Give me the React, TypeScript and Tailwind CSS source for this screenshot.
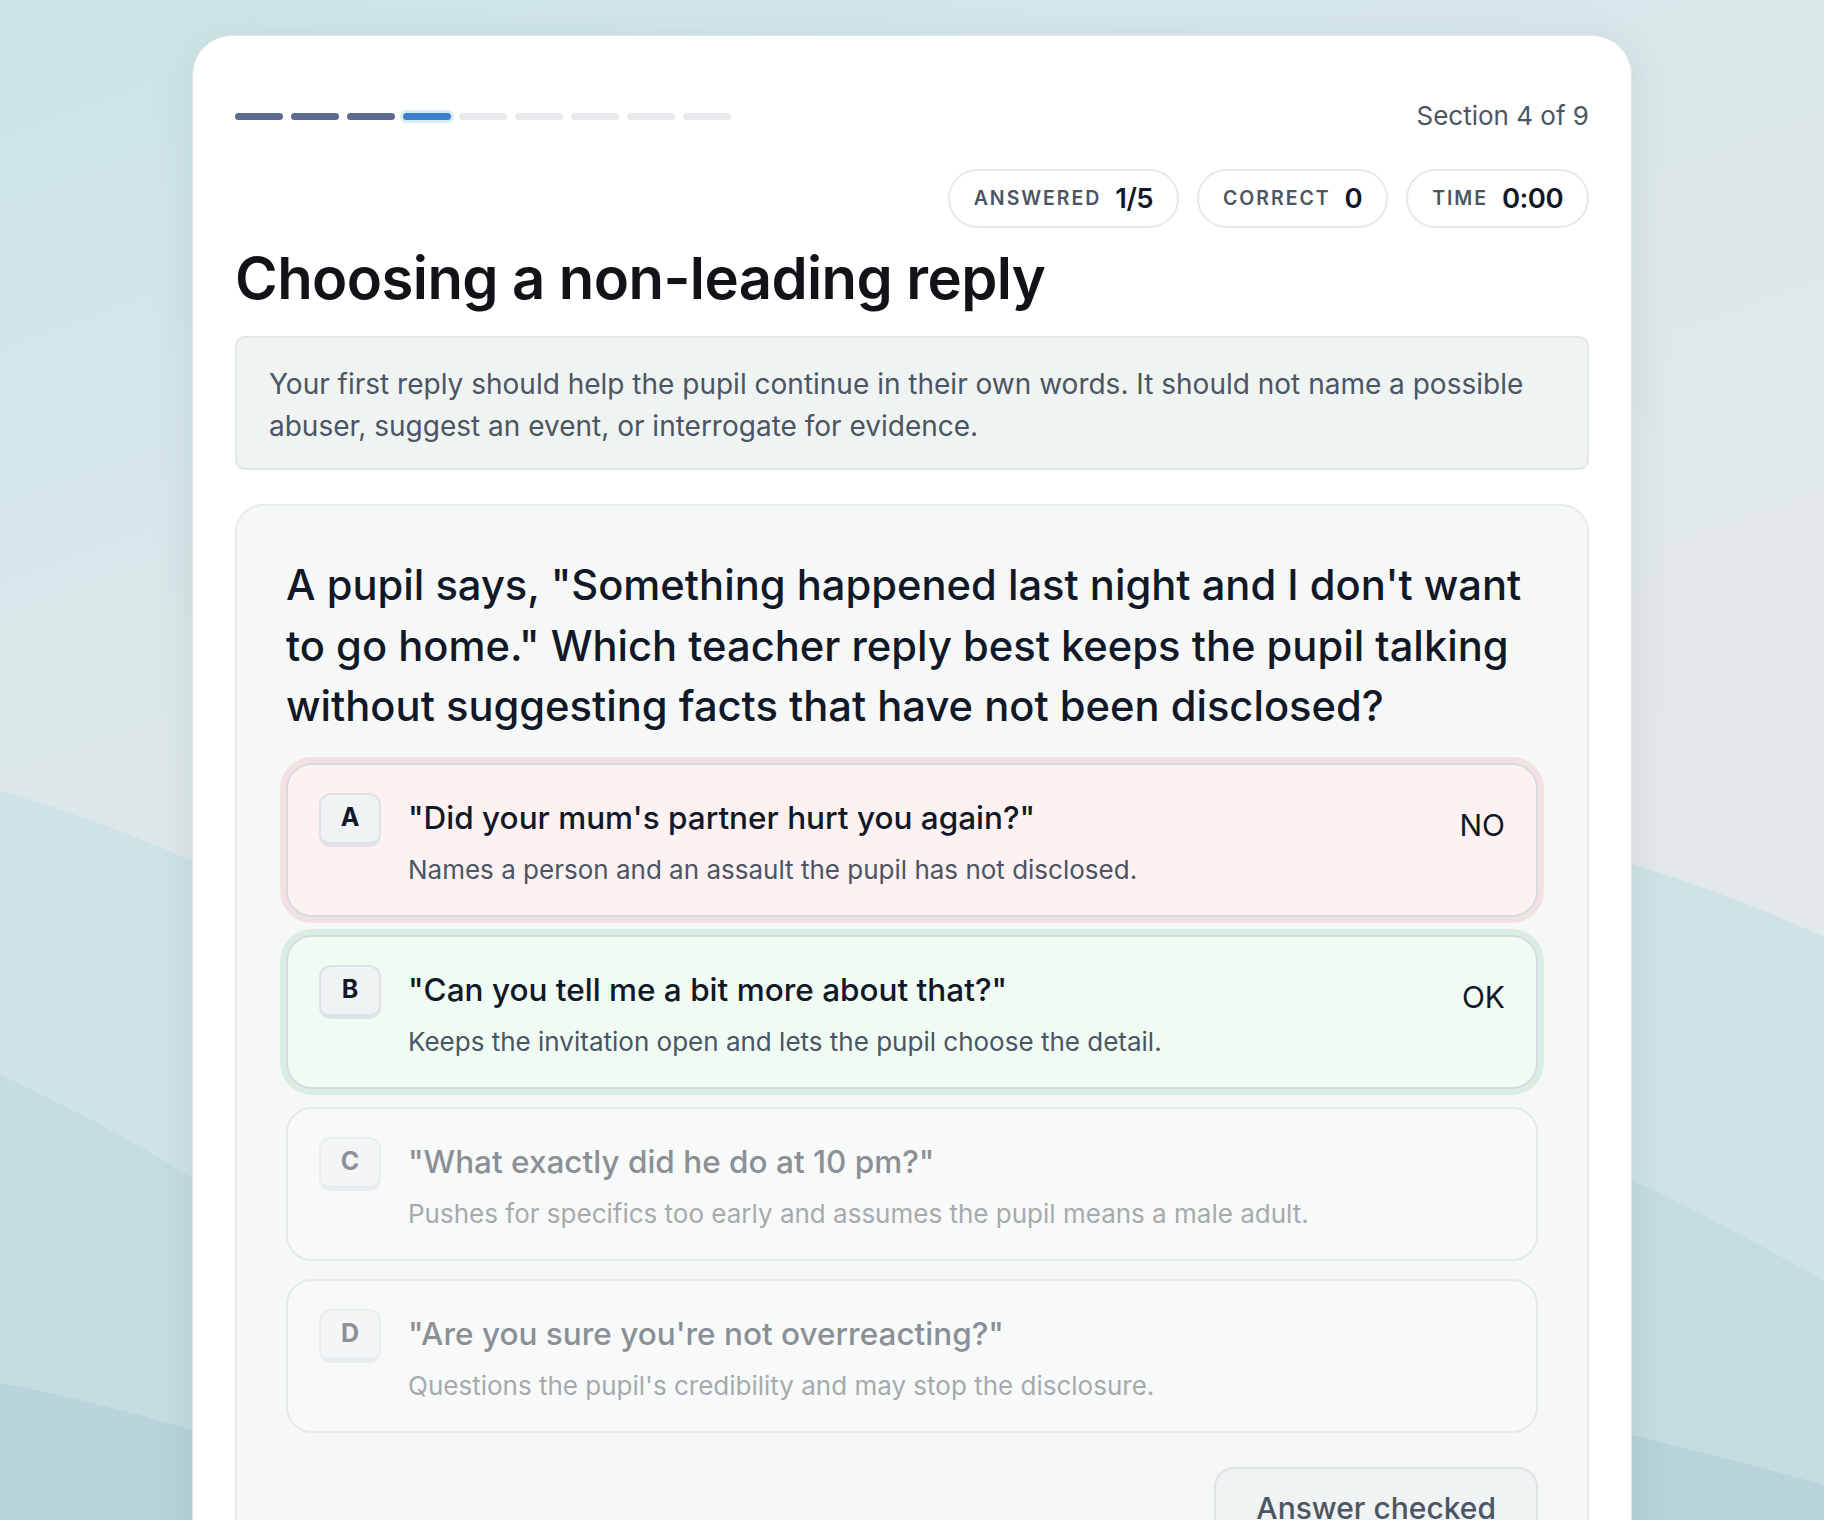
import React from 'react';

type Option = {
  letter: string;
  title: string;
  note: string;
  state: 'wrong' | 'right' | 'idle';
  verdict?: string;
};

const options: Option[] = [
  {
    letter: 'A',
    title: '"Did your mum\'s partner hurt you again?"',
    note: 'Names a person and an assault the pupil has not disclosed.',
    state: 'wrong',
    verdict: 'NO',
  },
  {
    letter: 'B',
    title: '"Can you tell me a bit more about that?"',
    note: 'Keeps the invitation open and lets the pupil choose the detail.',
    state: 'right',
    verdict: 'OK',
  },
  {
    letter: 'C',
    title: '"What exactly did he do at 10 pm?"',
    note: 'Pushes for specifics too early and assumes the pupil means a male adult.',
    state: 'idle',
  },
  {
    letter: 'D',
    title: '"Are you sure you\'re not overreacting?"',
    note: "Questions the pupil's credibility and may stop the disclosure.",
    state: 'idle',
  },
];

// 9 sections, 3 done, 4th current
const steps = [0, 1, 2, 3, 4, 5, 6, 7, 8];

function Waves() {
  return (
    <svg
      className="absolute inset-0 h-full w-full"
      viewBox="0 0 1824 1520"
      preserveAspectRatio="none"
      aria-hidden
    >
      <path d="M0 791 Q96 818 192 861 L1632 864 Q1728 893 1824 937 L1824 1520 L0 1520 Z" fill="#cfe3e6" />
      <path d="M0 1075 Q96 1118 192 1178 L1632 1180 Q1728 1226 1824 1281 L1824 1520 L0 1520 Z" fill="#c4dde0" />
      <path d="M0 1383 Q96 1401 192 1430 L1632 1435 Q1728 1458 1824 1485 L1824 1520 L0 1520 Z" fill="#b8d4d8" />
    </svg>
  );
}

function Stat({ label, value }: { label: string; value: string }) {
  return (
    <div className="flex h-[59px] items-center gap-[14px] rounded-full border-2 border-[#e6e9ec] bg-white px-6">
      <span className="text-[19.5px] font-semibold tracking-[0.1em] text-[#4b5563]">{label}</span>
      <span className="text-[27.5px] font-semibold tracking-[-0.02em] text-[#111827]">{value}</span>
    </div>
  );
}

function OptionRow({ o }: { o: Option }) {
  const box =
    o.state === 'wrong'
      ? 'bg-[#fdf1f1] border-[#d6dbe0] ring-[6px] ring-[#f3e1e2]'
      : o.state === 'right'
        ? 'bg-[#effbf3] border-[#d6dbe0] ring-[6px] ring-[#d9eee2]'
        : 'bg-[#f8faf9] border-[#e5e9ec]';
  const faded = o.state === 'idle';

  return (
    <div className={`flex items-start rounded-[26px] border-2 pt-[28px] pr-[31px] pb-[27px] pl-[31px] ${box}`}>
      <div
        className={`flex h-[54px] w-[62px] shrink-0 items-center justify-center rounded-[12px] border-2 border-b-[5px] text-[25px] font-bold ${
          faded
            ? 'border-[#eaedef] bg-[#f3f5f6] text-[#8c9197]'
            : 'border-[#dfe3e7] bg-[#f0f3f4] text-[#111827]'
        }`}
      >
        {o.letter}
      </div>
      <div className="ml-[27px] mt-[5px] flex-1">
        <div className={`text-[31.5px] font-medium leading-[40px] ${faded ? 'text-[#8b9096]' : 'text-[#111827]'}`}>
          {o.title}
        </div>
        <div className={`mt-[14px] text-[26px] leading-[36px] ${faded ? 'text-[#a5aaaf]' : 'text-[#4b5563]'}`}>
          {o.note}
        </div>
      </div>
      {o.verdict && (
        <div className="mt-[12px] text-[30px] leading-[40px] text-[#111827]">{o.verdict}</div>
      )}
    </div>
  );
}

export default function App() {
  return (
    <div className="relative h-[1520px] overflow-hidden bg-[linear-gradient(160deg,#cae4e6_0%,#d9e7e9_30%,#e2e8ea_55%,#e4eaeb_100%)] font-['Inter',sans-serif]">
      <Waves />

      <div className="relative mx-auto mt-[35px] w-[1440px] rounded-t-[40px] border border-[#e2e6e9] bg-white px-[42px] pt-[62px] shadow-[0_10px_40px_rgba(40,70,80,0.10)]">
        {/* progress + section */}
        <div className="flex h-9 items-center justify-between">
          <div className="flex gap-2">
            {steps.map((i) => (
              <div
                key={i}
                className={`h-[7px] w-12 rounded-full ${
                  i < 3
                    ? 'bg-[#5b6b94]'
                    : i === 3
                      ? 'bg-[#3a80cc] ring-[3px] ring-[#d9ecef]'
                      : 'bg-[#e8eaee]'
                }`}
              />
            ))}
          </div>
          <div className="text-[26px] leading-9 text-[#4b5563]">Section 4 of 9</div>
        </div>

        {/* stats */}
        <div className="mt-[35px] flex justify-end gap-[18px]">
          <Stat label="ANSWERED" value="1/5" />
          <Stat label="CORRECT" value="0" />
          <Stat label="TIME" value="0:00" />
        </div>

        <h1 className="mt-[18px] text-[58px] font-semibold leading-[64px] tracking-[-0.01em] text-[#111318]">
          Choosing a non-leading reply
        </h1>

        <div className="mt-[26px] rounded-[10px] border-2 border-[#e3e7e9] bg-[#eff3f2] px-[32px] pt-[25px] pb-[21px] text-[28px] leading-[42px] text-[#4b5563]">
          Your first reply should help the pupil continue in their own words. It should not name a possible
          abuser, suggest an event, or interrogate for evidence.
        </div>

        {/* question panel */}
        <div className="mt-[34px] rounded-[28px] border-2 border-[#e7ebec] bg-[#f5f8f7] p-[49px]">
          <p className="text-[41.7px] font-medium leading-[60.5px] text-[#111827]">
            A pupil says, "Something happened last night and I don't want to go home." Which teacher reply best
            keeps the pupil talking without suggesting facts that have not been disclosed?
          </p>

          <div className="mt-[26px] flex flex-col gap-[18px]">
            {options.map((o) => (
              <OptionRow key={o.letter} o={o} />
            ))}
          </div>

          <div className="mt-[34px] flex justify-end">
            <button
              type="button"
              className="rounded-[20px] border-2 border-[#dfe2e6] bg-[#f0f3f3] px-[40px] pt-[19px] pb-[19px] text-[30px] font-medium leading-[40px] text-[#4b5563]"
            >
              Answer checked
            </button>
          </div>
        </div>
      </div>
    </div>
  );
}
